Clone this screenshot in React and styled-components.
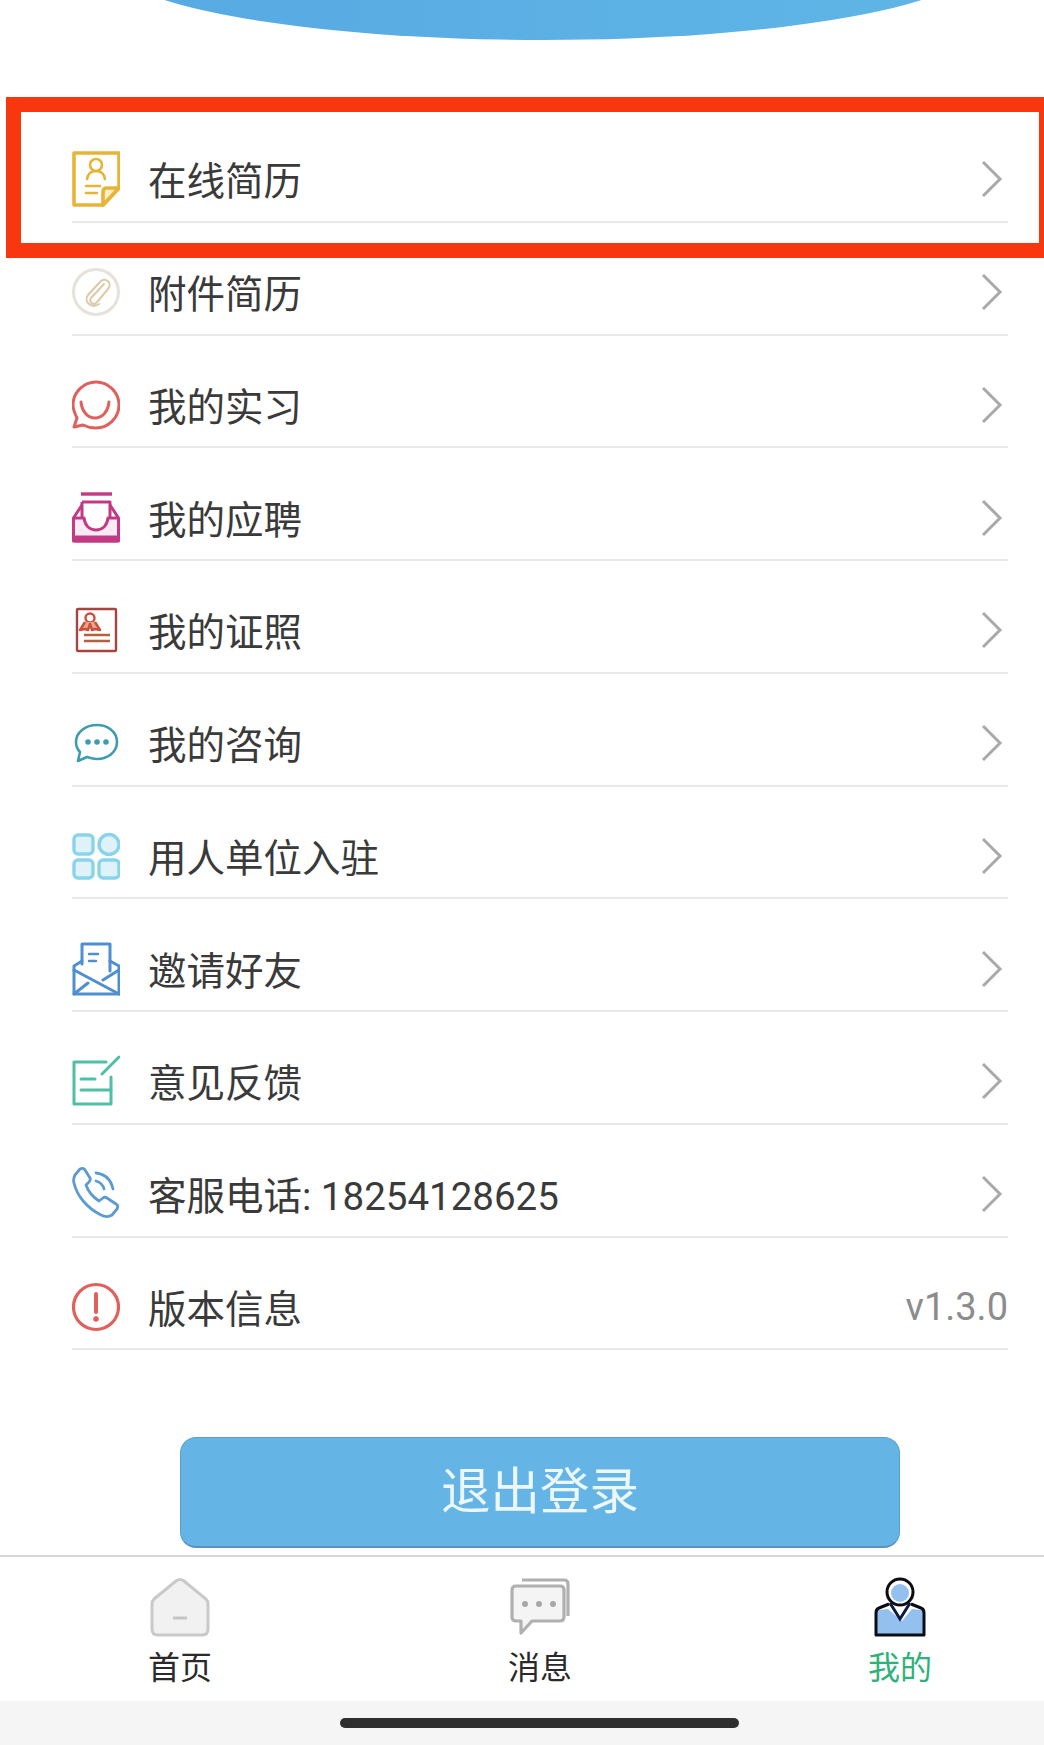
import React from 'react';
import styled, { createGlobalStyle } from 'styled-components';

const GlobalStyle = createGlobalStyle`
  html, body {
    margin: 0;
    padding: 0;
    background: #fff;
  }
`;

const Y = '#e6b437';
const RED = '#e0605c';

const icons = {
  resume: (
    <g fill="none" stroke={Y} strokeWidth="3.6" strokeLinejoin="round" strokeLinecap="round">
      <path d="M2 2h45v35L31 54H2z" />
      <path d="M47 37H35q-4 0-4 4v13z" fill="#fbeec8" />
      <circle cx="24" cy="14" r="6" strokeWidth="2.6" />
      <path d="M15 28c1-6 4-8 9-8s8 2 9 8" strokeWidth="2.6" />
      <path d="M14 35h14M14 42h11" strokeWidth="2.6" />
    </g>
  ),
  clip: (
    <g fill="none">
      <circle cx="24" cy="28" r="22.5" stroke="#e6e1da" strokeWidth="3" />
      <path
        d="M32 20 19 34c-3 4 3 8 6 4l11-13c5-6-3-13-8-7L16 31c-5 7 4 14 11 9"
        stroke="#dcc9a8"
        strokeWidth="2"
        strokeLinecap="round"
      />
    </g>
  ),
  smile: (
    <g fill="none" stroke={RED} strokeWidth="3" strokeLinecap="round" strokeLinejoin="round">
      <path d="M24 5c12 0 23 10 23 23S36 51 24 51c-5 0-9-1-13-3l-9 2 3-9C3 37 1 33 1 28 1 15 12 5 24 5z" />
      <path d="M9 25c1 10 7 16 14 16s13-6 14-16" />
    </g>
  ),
  inbox: (
    <g fill="none" stroke="#c23a83" strokeWidth="3" strokeLinejoin="round">
      <path d="M9 4h31" strokeWidth="3.4" />
      <path d="M10 12h28v16" />
      <path d="M10 12v16" />
      <path d="M1.500 28 10 15M46.500 28 38 15" />
      <path
        d="M1.500 28H12c1 8 6 12 12 12s11-4 12-12h10.500v21q0 2-2 2H3.500q-2 0-2-2z"
        fill="#fbeaf3"
      />
      <path d="M1.500 47h45v4h-45z" fill="#c23a83" />
    </g>
  ),
  cert: (
    <g fill="none" stroke="#a8433f" strokeWidth="2.400" strokeLinejoin="round">
      <rect x="5" y="7" width="39" height="42" rx="1" />
      <circle cx="18" cy="16" r="4.500" stroke="#c9503a" />
      <path d="M13 20 8 28l5-1 3 1 2-6 2 6 3-1 5 1-5-8" stroke="#c9503a" fill="#eaa58e" />
      <path d="M12 33h26M12 39h26" stroke="#b5603f" />
    </g>
  ),
  chat: (
    <g fill="none" stroke="#3d9cb0" strokeWidth="2.600" strokeLinecap="round" strokeLinejoin="round">
      <path d="M25 10c11 0 20 7 20 17s-9 17-20 17c-4 0-7-1-10-2l-9 4 2-9c-3-3-4-6-4-10 0-10 10-17 21-17z" />
      <circle cx="16" cy="27" r="1.500" fill="#3d9cb0" />
      <circle cx="25" cy="27" r="1.500" fill="#3d9cb0" />
      <circle cx="34" cy="27" r="1.500" fill="#3d9cb0" />
    </g>
  ),
  grid: (
    <g fill="#dff2f9" stroke="#8ad4ea" strokeWidth="3.400">
      <rect x="2" y="7" width="19" height="19" rx="4" />
      <circle cx="37" cy="16.500" r="10" />
      <rect x="2" y="32" width="19" height="18" rx="4" />
      <rect x="27" y="32" width="20" height="18" rx="4" />
    </g>
  ),
  mail: (
    <g fill="none" stroke="#4f8fd0" strokeWidth="3" strokeLinejoin="round" strokeLinecap="round">
      <path d="M10 23V3h28v27" />
      <path d="M10 20 2 25v28h45V25l-9-5" />
      <path d="M2 29l45 24M47 29 31 39M2 53l14-11" />
      <path d="M17 13h9M17 20h7" strokeWidth="2.400" />
    </g>
  ),
  edit: (
    <g fill="none" stroke="#4fbfa5" strokeWidth="3" strokeLinejoin="round" strokeLinecap="round">
      <path d="M34 9H2v42h37V24" />
      <path d="M47 4 30 21" />
      <path d="M9 26h14M9 37h30" />
    </g>
  ),
  phone: (
    <g fill="none" stroke="#5b9bd0" strokeWidth="2.800" strokeLinecap="round" strokeLinejoin="round">
      <path d="M3 9 8 3c2-1 4-1 5 1l5 8c1 2 0 3-1 4l-3 3c2 6 7 12 13 16l4-3c1-1 3-1 4 0l9 6c2 1 2 3 1 5l-5 6c-3 2-7 2-11 0C15 42 5 30 2 17c-1-3 0-6 1-8z" />
      <path d="M24 7c9 1 15 7 17 16M24 15c4 1 7 4 8 8" />
    </g>
  ),
  alert: (
    <g fill="none" stroke={RED} strokeWidth="3.200" strokeLinecap="round">
      <circle cx="24" cy="28" r="22.500" />
      <path d="M24 15v18" strokeWidth="4" />
      <circle cx="24" cy="40" r="1.200" fill={RED} />
    </g>
  ),
};

const rows = [
  { icon: 'resume', label: '在线简历' },
  { icon: 'clip', label: '附件简历' },
  { icon: 'smile', label: '我的实习' },
  { icon: 'inbox', label: '我的应聘' },
  { icon: 'cert', label: '我的证照' },
  { icon: 'chat', label: '我的咨询' },
  { icon: 'grid', label: '用人单位入驻' },
  { icon: 'mail', label: '邀请好友' },
  { icon: 'edit', label: '意见反馈' },
  { icon: 'phone', label: '客服电话: 18254128625' },
  { icon: 'alert', label: '版本信息', value: 'v1.3.0' },
];

const App = () => (
  <Page>
    <GlobalStyle />
    <Content>
      <Curve>
        <CurveShape />
      </Curve>
      <MenuList>
        {rows.map(row => (
          <MenuRow key={row.icon}>
            <RowIcon viewBox="0 0 48 56">{icons[row.icon]}</RowIcon>
            <RowLabel>{row.label}</RowLabel>
            {row.value ? (
              <RowValue>{row.value}</RowValue>
            ) : (
              <Chevron viewBox="0 0 22 38">
                <path d="M2 2l17 17L2 36" />
              </Chevron>
            )}
          </MenuRow>
        ))}
      </MenuList>
      <LogoutButton>退出登录</LogoutButton>
    </Content>
    <TabBar>
      <Tab>
        <TabIcon viewBox="0 0 60 60">
          <path
            d="M4 22 26 4q4-3 8 0l22 18q2 2 2 5v25q0 6-6 6H8q-6 0-6-6V27q0-3 2-5z"
            fill="#f1f1f1"
            stroke="#c9c9c9"
            strokeWidth="3"
          />
          <path d="M23 41h14" stroke="#c4c4c4" strokeWidth="3" />
        </TabIcon>
        <TabLabel>首页</TabLabel>
      </Tab>
      <Tab>
        <TabIcon viewBox="0 0 60 60">
          <g fill="none" stroke="#b0b0b0" strokeWidth="3.200" strokeLinejoin="round">
            <path d="M12 3h42q4 0 4 4v32" />
            <path
              d="M6 9h44q4 0 4 4v27q0 4-4 4H22L11 56V44H6q-4 0-4-4V13q0-4 4-4z"
              fill="#f4f4f4"
            />
          </g>
          <circle cx="15" cy="27" r="3" fill="#a8a8a8" />
          <circle cx="29" cy="27" r="3" fill="#a8a8a8" />
          <circle cx="43" cy="27" r="3" fill="#a8a8a8" />
        </TabIcon>
        <TabLabel>消息</TabLabel>
      </Tab>
      <Tab>
        <TabIcon viewBox="0 0 60 60">
          <circle cx="30" cy="15" r="13" fill="#fff" stroke="#0c0c14" strokeWidth="3" />
          <circle cx="30" cy="16" r="9" fill="#93c0ef" />
          <path
            d="M18 32 9 33q-3 1-3 5v20h48V38q0-4-3-5l-9-1-10 12z"
            fill="#93c0ef"
          />
          <path
            d="M19 27 9 31q-3 1-3 5v22h48V36q0-4-3-5l-10-4"
            fill="none"
            stroke="#0c0c14"
            strokeWidth="3"
            strokeLinejoin="round"
          />
          <path d="M20 26l10 16 10-16" fill="none" stroke="#0a1a40" strokeWidth="3" />
        </TabIcon>
        <TabLabel $active>我的</TabLabel>
      </Tab>
    </TabBar>
    <HomeArea>
      <HomeBar />
    </HomeArea>
    <Highlight />
  </Page>
);

export default App;

const Page = styled.div`
  position: relative;
  width: 1044px;
  height: 1745px;
  overflow: hidden;
  background: #fff;
  font-family: Roboto, 'Noto Sans CJK SC', sans-serif;
`;

const Content = styled.div`
  height: 1555px;
  box-sizing: border-box;
  padding: 0 36px 0 72px;
`;

const Curve = styled.div`
  display: flex;
  justify-content: center;
  height: 40px;
  padding-left: 5px;
  overflow: hidden;
`;

const CurveShape = styled.div`
  flex: none;
  width: 874px;
  height: 160px;
  margin-top: -120px;
  border-radius: 50%;
  background: linear-gradient(90deg, #57a9e2, #5fb6e6);
`;

const MenuList = styled.div`
  margin-top: 70px;
`;

const MenuRow = styled.div`
  display: flex;
  align-items: center;
  box-sizing: border-box;
  height: 112.75px;
  padding-top: 28px;
  border-bottom: 2px solid #e9e9e9;
`;

const RowIcon = styled.svg`
  flex: none;
  width: 48px;
  height: 56px;
  margin-right: 28px;
`;

const RowLabel = styled.span`
  flex: 1;
  padding-top: 6px;
  font-size: 38.5px;
  line-height: 50px;
  color: #3a3a3a;
`;

const RowValue = styled.span`
  font-size: 38px;
  line-height: 50px;
  color: #8c8c8c;
`;

const Chevron = styled.svg`
  flex: none;
  width: 22px;
  height: 38px;
  margin-right: 5px;

  path {
    fill: none;
    stroke: #a9a9a9;
    stroke-width: 3;
  }
`;

const LogoutButton = styled.div`
  display: flex;
  align-items: center;
  justify-content: center;
  box-sizing: border-box;
  width: 720px;
  height: 111px;
  margin: 87px 0 0 108px;
  padding-bottom: 10px;
  border: 1px solid #5b9fcb;
  border-bottom: 2px solid #5b93b8;
  border-radius: 16px;
  background: #64b5e6;
  color: #ecf7fd;
  font-size: 49.5px;
`;

const TabBar = styled.div`
  display: grid;
  grid-template-columns: 360px 360px 360px;
  box-sizing: border-box;
  height: 146px;
  padding-top: 20px;
  border-top: 2px solid #d6d6d6;
`;

const Tab = styled.div`
  display: flex;
  flex-direction: column;
  align-items: center;
`;

const TabIcon = styled.svg`
  flex: none;
  width: 60px;
  height: 60px;
`;

const TabLabel = styled.span`
  margin-top: 11px;
  font-size: 32px;
  line-height: 40px;
  color: ${props => (props.$active ? '#2eb27a' : '#2a2a2a')};
`;

const HomeArea = styled.div`
  display: flex;
  justify-content: center;
  height: 44px;
  box-sizing: border-box;
  padding: 17px 0 0 35px;
  background: #f5f5f5;
`;

const HomeBar = styled.div`
  width: 399px;
  height: 10px;
  border-radius: 5px;
  background: #2f2f2f;
`;

const Highlight = styled.div`
  position: absolute;
  left: 6px;
  top: 97px;
  box-sizing: border-box;
  width: 1048px;
  height: 161px;
  border: 15px solid #f9370f;
`;
